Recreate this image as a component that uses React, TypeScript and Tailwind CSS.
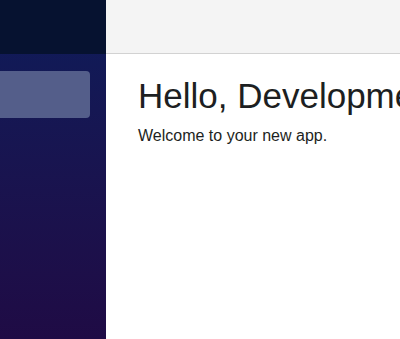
export default function App() {
  return (
    <div className="flex h-[339px] w-[400px] overflow-hidden bg-white" style={{ fontFamily: '"Liberation Sans", Arial, sans-serif' }}>
      <div className="flex w-[106px] shrink-0 flex-col bg-gradient-to-b from-[#0c1c5a] to-[#1f0b45]">
        <div className="h-[54px] bg-[#061230]" />
        <nav className="pt-[17px] pr-[16px]">
          <div className="h-[47px] rounded-r-[4px] bg-[#545e8a]" />
        </nav>
      </div>
      <main className="flex min-w-0 flex-1 flex-col">
        <div className="h-[54px] shrink-0 border-b border-[#d2d2d2] bg-[#f4f4f4]" />
        <article className="whitespace-nowrap px-8 pt-[21px] text-[#1d1f22]">
          <h1 className="text-[35px] leading-[1.2] mb-[7px]">Hello, Development!</h1>
          <p className="text-[16px] leading-[1.5]">Welcome to your new app.</p>
        </article>
      </main>
    </div>
  );
}
